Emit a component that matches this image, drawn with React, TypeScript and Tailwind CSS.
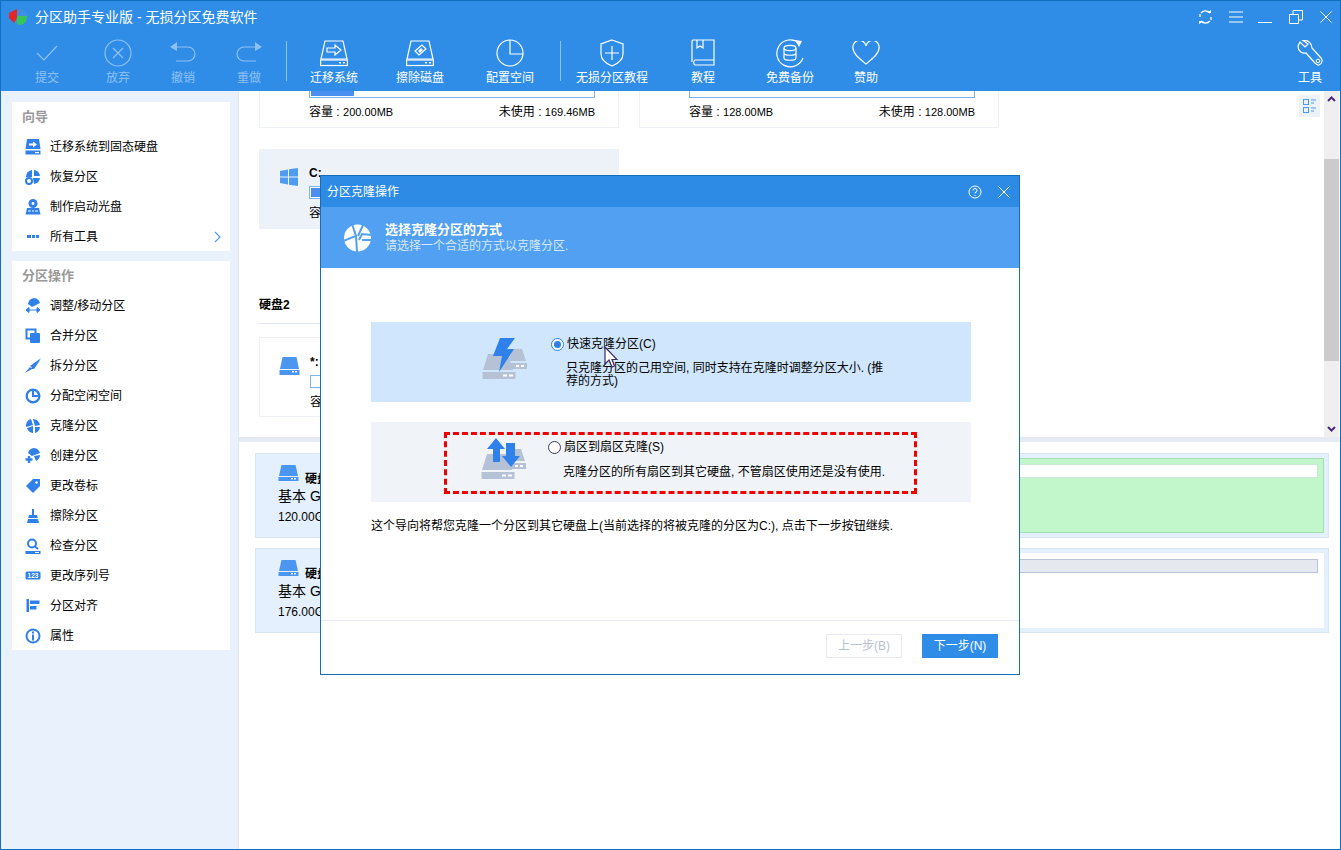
import type { ReactNode } from "react";

const BLUE = "#2f80e8";

function Ic({ w = 16, h = 16, box, children, className = "" }: { w?: number; h?: number; box?: string; children: ReactNode; className?: string }) {
  return (
    <svg width={w} height={h} viewBox={box ?? `0 0 ${w} ${h}`} fill="none" className={`block shrink-0 ${className}`}>
      {children}
    </svg>
  );
}

// hard disk shape used by many icons
function DiskSolid({ color = "#4a96f0", tall }: { color?: string; tall?: boolean }) {
  const top = tall ? 12 : 11;
  return (
    <Ic w={21} h={tall ? 18 : 16}>
      <path d={`M3.5 0H17.5L20 ${top}H1Z`} fill={color} />
      <rect x="0.5" y={top + 1} width="20" height={tall ? 5 : 4} fill={color} />
      <rect x="13" y={top + 2} width="2" height="1.4" fill="#fff" />
      <rect x="16" y={top + 2} width="2" height="1.4" fill="#fff" />
    </Ic>
  );
}

function CloneDisks({ bolt }: { bolt: boolean }) {
  return (
    <Ic w={46} h={44}>
      <path d="M31 11H40L44 23H26Z" fill="#b5c2d6" />
      <rect x="26" y="25" width="19" height="6" fill="#b5c2d6" />
      <path d="M6 16H26L31 32H1Z" fill="#b5c2d6" />
      <rect x="0.5" y="34" width="33" height="7" fill="#b5c2d6" />
      <rect x="21" y="36.5" width="4" height="2" fill="#fff" />
      <rect x="27" y="36.5" width="4" height="2" fill="#fff" />
      <rect x="34" y="27" width="3" height="2" fill="#fff" />
      <rect x="39" y="27" width="3" height="2" fill="#fff" />
      {bolt ? (
        <path d="M18 0H33L25 11H32L17 34L20 18H11Z" fill="#2f80e8" />
      ) : (
        <>
          <path d="M15 0L24 11H19V24H12V11H6Z" fill="#2f80e8" />
          <path d="M25 5H34V18H39L30 29L21 18H25Z" fill="#2f80e8" />
        </>
      )}
    </Ic>
  );
}

const S = { stroke: "#fff", strokeWidth: 1.2 };
const D = { stroke: "#8fc0f3", strokeWidth: 1.2 };

const tools: { label: string; w: number; off?: boolean; icon: ReactNode; sep?: boolean }[] = [
  {
    label: "提交", w: 70, off: true,
    icon: <Ic w={28} h={28}><path d="M4 14L11 21L24 7" {...D} /></Ic>,
  },
  {
    label: "放弃", w: 72, off: true,
    icon: <Ic w={28} h={28}><circle cx="14" cy="14" r="13" {...D} /><path d="M9 9L19 19M19 9L9 19" {...D} /></Ic>,
  },
  {
    label: "撤销", w: 58, off: true,
    icon: <Ic w={28} h={28}><path d="M6 8H19A6.5 6.5 0 0 1 19 22H7" {...D} /><path d="M8 3V12L1 8Z" fill="#8fc0f3" /></Ic>,
  },
  {
    label: "重做", w: 74, off: true, sep: true,
    icon: <Ic w={28} h={28}><path d="M22 8H9A6.5 6.5 0 0 0 9 22H21" {...D} /><path d="M20 3V12L27 8Z" fill="#8fc0f3" /></Ic>,
  },
  {
    label: "迁移系统", w: 92,
    icon: (
      <Ic w={28} h={28}>
        <path d="M5 2H23L27 20H1Z" {...S} />
        <rect x="0.6" y="21" width="26.8" height="5.5" {...S} />
        <rect x="19" y="23" width="2" height="1.4" fill="#fff" />
        <rect x="23" y="23" width="2" height="1.4" fill="#fff" />
        <path d="M7 9H15V6L21 11L15 16V13H7Z" {...S} />
      </Ic>
    ),
  },
  {
    label: "擦除磁盘", w: 80,
    icon: (
      <Ic w={28} h={28}>
        <path d="M5 2H23L27 20H1Z" {...S} />
        <rect x="0.6" y="21" width="26.8" height="5.5" {...S} />
        <rect x="19" y="23" width="2" height="1.4" fill="#fff" />
        <rect x="23" y="23" width="2" height="1.4" fill="#fff" />
        <path d="M9 12L16 6L20 10L13 16Z" {...S} />
        <path d="M12 12L15 9L17 11L14 14Z" fill="#fff" />
      </Ic>
    ),
  },
  {
    label: "配置空间", w: 100, sep: true,
    icon: <Ic w={28} h={28}><circle cx="14" cy="14" r="13" {...S} /><path d="M14 1V15H27" {...S} /></Ic>,
  },
  {
    label: "无损分区教程", w: 100,
    icon: <Ic w={24} h={28}><path d="M12 1L23 5V15C23 21 17 25 12 27C7 25 1 21 1 15V5Z" {...S} /><path d="M12 7V21M5 14H19" {...S} /></Ic>,
  },
  {
    label: "教程", w: 82,
    icon: (
      <Ic w={24} h={28}>
        <path d="M1 23V2A1.5 1.5 0 0 1 2.5 1H23V26H4A3 3 0 0 1 4 21H23" {...S} />
        <path d="M6 1V9L9 7L12 9V1" {...S} />
      </Ic>
    ),
  },
  {
    label: "免费备份", w: 92,
    icon: (
      <Ic w={30} h={30}>
        <path d="M24 5A13.5 13.5 0 1 0 28 20" {...S} />
        <path d="M20 2L27 3L24 9Z" fill="#fff" />
        <ellipse cx="15" cy="10" rx="6" ry="2.6" {...S} />
        <path d="M9 10V20C9 23 21 23 21 20V10M9 15C9 18 21 18 21 15" {...S} />
      </Ic>
    ),
  },
  {
    label: "赞助", w: 60,
    icon: <Ic w={28} h={24}><path d="M14 23C8 18 1 13 1 7A6 6 0 0 1 14 5A6 6 0 0 1 27 7C27 13 20 18 14 23Z" {...S} /></Ic>,
  },
];

function ToolBtn({ t }: { t: (typeof tools)[number] }) {
  return (
    <div className="flex flex-col items-center" style={{ width: t.w }}>
      <div className="h-[30px] flex items-center justify-center">{t.icon}</div>
      <div className={`mt-[2px] text-[12px] leading-[16px] whitespace-nowrap ${t.off ? "text-[#8fc0f3]" : "text-white"}`}>{t.label}</div>
    </div>
  );
}

function Header() {
  return (
    <header className="h-[90px] shrink-0 bg-[#2f8de8] flex flex-col">
      <div className="h-[32px] flex items-center pl-[7px]">
        <Ic w={20} h={18}>
          <circle cx="12" cy="9" r="8" fill="#3d8fe0" />
          <path d="M1 5L9 1V10H1Z" fill="#e4262b" />
          <path d="M9 10L6 15L1 10Z" fill="#e4262b" />
          <path d="M9 8H19C19 13 16 17 11 17L9 15Z" fill="#35c65a" />
        </Ic>
        <div className="ml-[7px] text-[14px] text-white whitespace-nowrap">分区助手专业版 - 无损分区免费软件</div>
        <div className="ml-auto flex items-center">
          <Ic w={14} h={16} className="mr-[17px]">
            <path d="M3 4A6 6 0 0 1 12 4M12 12A6 6 0 0 1 3 12M2 8V5M13 8V11" stroke="#fff" strokeWidth="1.3" />
            <path d="M9 4H13V1Z" fill="#fff" />
            <path d="M6 12H1V15Z" fill="#fff" />
          </Ic>
          <Ic w={14} h={12} className="mr-[15px]"><path d="M0 1H14M0 6H14M0 11H14" stroke="#fff" strokeWidth="1" /></Ic>
          <Ic w={14} h={14} className="mr-[17px]"><path d="M0 12.5H14" stroke="#fff" strokeWidth="1" /></Ic>
          <Ic w={14} h={14} className="mr-[17px]">
            <path d="M0.5 4.5H9.5V13.5H0.5ZM4 4V0.5H13.5V10H10" stroke="#fff" strokeWidth="1" />
          </Ic>
          <Ic w={12} h={12} className="mr-[8px]"><path d="M0.5 0.5L11.5 11.5M11.5 0.5L0.5 11.5" stroke="#fff" strokeWidth="1" /></Ic>
        </div>
      </div>
      <div className="flex-1 flex items-start pl-[11px] pt-[5px]">
        {tools.map((t) => (
          <div key={t.label} className="flex items-start">
            <ToolBtn t={t} />
            {t.sep && <div className="w-px h-[40px] mt-[3px] mr-[1px] bg-[#8fc0f3]" />}
          </div>
        ))}
        <div className="ml-auto flex flex-col items-center w-[60px]">
          <div className="h-[30px] flex items-center">
            <Ic w={26} h={26}>
              <path d="M3 2L8 7L11 4L6 0.5C11 0 15 3 15 8L24 18C26 20 25 24 22 25C20 25.5 19 24 18 23L9 13C5 14 1 11 1 6Z" stroke="#fff" strokeWidth="1.2" />
              <circle cx="21" cy="21" r="1.8" stroke="#fff" />
            </Ic>
          </div>
          <div className="mt-[2px] text-[12px] leading-[16px] text-white">工具</div>
        </div>
      </div>
    </header>
  );
}

const navIcons: Record<string, ReactNode> = {
  migrate: (
    <Ic w={16} h={16}>
      <path d="M2 0H14L15.5 10H.5Z" fill={BLUE} />
      <rect x="0.5" y="11.5" width="15" height="4" fill={BLUE} />
      <path d="M4 4.5H8V2.5L12 5.5L8 8.5V6.5H4Z" fill="#fff" />
      <rect x="10" y="13" width="4" height="1.2" fill="#fff" />
    </Ic>
  ),
  restore: (
    <Ic w={16} h={16}>
      <path d="M7 1V8H1A7 7 0 0 1 7 1Z" fill={BLUE} />
      <path d="M9 1A7 7 0 0 1 15 7H9Z" fill={BLUE} />
      <path d="M8 9H15A7 7 0 0 1 9 15Z" fill={BLUE} />
      <circle cx="4" cy="12" r="3" stroke={BLUE} strokeWidth="2" />
    </Ic>
  ),
  boot: (
    <Ic w={16} h={16}>
      <circle cx="8" cy="4.5" r="4.5" fill={BLUE} />
      <circle cx="8" cy="4.5" r="1.4" fill="#fff" />
      <path d="M2 9H14L15.5 15.5H.5Z" fill={BLUE} />
      <path d="M3 12H6M7 12H9M10 12H13" stroke="#fff" />
    </Ic>
  ),
  dots: <Ic w={16} h={16}><path d="M2 6H6V9H2ZM7 6H10V9H7ZM11 6H14V9H11Z" fill={BLUE} /></Ic>,
  resize: (
    <Ic w={16} h={16}>
      <path d="M9 0A7 7 0 0 1 15 5L7 9L3 6A7 7 0 0 1 9 0Z" fill={BLUE} />
      <path d="M1 12H15M1 12L4 9.5V14.5ZM15 12L12 9.5V14.5Z" fill={BLUE} stroke={BLUE} />
    </Ic>
  ),
  merge: (
    <Ic w={16} h={16}>
      <rect x="1.5" y="1.5" width="9" height="9" stroke={BLUE} strokeWidth="2" />
      <rect x="5" y="5" width="10" height="10" rx="1" fill={BLUE} />
    </Ic>
  ),
  split: (
    <Ic w={16} h={16}>
      <path d="M16 0L8 10L5 8Z" fill={BLUE} />
      <path d="M16 1L9 11H5Z" fill={BLUE} />
      <path d="M0 15L5 9L7 11Z" fill={BLUE} />
    </Ic>
  ),
  alloc: (
    <Ic w={16} h={16}>
      <circle cx="8" cy="8" r="6.3" stroke={BLUE} strokeWidth="2.4" />
      <path d="M8 3V8H13A5 5 0 0 1 8 13A5 5 0 0 1 8 3Z" fill="#fff" />
      <path d="M8 2V8H14" stroke={BLUE} strokeWidth="2" />
    </Ic>
  ),
  clone: (
    <Ic w={16} h={16}>
      <path d="M6 1L8 7L1 9A7 7 0 0 1 6 1Z" fill={BLUE} />
      <path d="M8 1A7 7 0 0 1 15 7L10 8Z" fill={BLUE} />
      <path d="M2 10L8 8L8 15A7 7 0 0 1 2 10Z" fill={BLUE} />
      <path d="M10 9H15A7 7 0 0 1 10 15Z" fill={BLUE} />
    </Ic>
  ),
  create: (
    <Ic w={16} h={16}>
      <path d="M9 0A7 7 0 0 1 15 5L7 8L3 5A7 7 0 0 1 9 0Z" fill={BLUE} />
      <path d="M9 8L15 7A7 7 0 0 1 11 13Z" fill={BLUE} />
      <path d="M4 8V15M0.5 11.5H7.5" stroke={BLUE} strokeWidth="2.4" />
    </Ic>
  ),
  tag: (
    <Ic w={16} h={16}>
      <path d="M8 1H15V8L8 15L1 8Z" fill={BLUE} />
      <circle cx="11.5" cy="4.5" r="1.2" fill="#fff" />
    </Ic>
  ),
  broom: (
    <Ic w={16} h={16}>
      <rect x="7" y="1" width="2" height="6" fill={BLUE} />
      <path d="M4 7H12L14 15H2Z" fill={BLUE} />
      <path d="M3 10.5H13" stroke="#fff" />
    </Ic>
  ),
  check: (
    <Ic w={16} h={16}>
      <circle cx="7" cy="5.5" r="4" stroke={BLUE} strokeWidth="2" />
      <path d="M10 8.5L13 11" stroke={BLUE} strokeWidth="2" />
      <rect x="0.5" y="13" width="15" height="3" fill={BLUE} />
      <rect x="10" y="14" width="4" height="1" fill="#fff" />
    </Ic>
  ),
  serial: (
    <Ic w={16} h={16}>
      <rect x="0.5" y="3.5" width="15" height="8" rx="1.5" fill={BLUE} />
      <text x="8" y="10" fontSize="6.5" fontWeight="700" fill="#fff" textAnchor="middle" fontFamily="Liberation Sans">123</text>
    </Ic>
  ),
  align: (
    <Ic w={16} h={16}>
      <rect x="1.5" y="1" width="2.5" height="13" fill={BLUE} />
      <rect x="5" y="2.5" width="9.5" height="3.5" fill={BLUE} />
      <rect x="5" y="8" width="6.5" height="3.5" fill={BLUE} />
    </Ic>
  ),
  info: (
    <Ic w={16} h={16}>
      <circle cx="8" cy="8" r="6.5" stroke={BLUE} strokeWidth="2" />
      <rect x="7" y="3.5" width="2" height="2" fill={BLUE} />
      <rect x="7" y="6.5" width="2" height="6" fill={BLUE} />
    </Ic>
  ),
};

function NavRow({ icon, label, more }: { icon: string; label: string; more?: boolean }) {
  return (
    <div className="h-[30px] flex items-center pl-[13px]">
      {navIcons[icon]}
      <span className="ml-[9px] text-[12px] text-black whitespace-nowrap">{label}</span>
      {more && (
        <Ic w={7} h={12} className="ml-auto mr-[9px]"><path d="M1 1L6 6L1 11" stroke="#4a9af0" strokeWidth="1.1" /></Ic>
      )}
    </div>
  );
}

function Sidebar() {
  const ops: [string, string][] = [
    ["resize", "调整/移动分区"], ["merge", "合并分区"], ["split", "拆分分区"], ["alloc", "分配空闲空间"],
    ["clone", "克隆分区"], ["create", "创建分区"], ["tag", "更改卷标"], ["broom", "擦除分区"],
    ["check", "检查分区"], ["serial", "更改序列号"], ["align", "分区对齐"], ["info", "属性"],
  ];
  return (
    <aside className="w-[238px] shrink-0 bg-[#e9f1fc] border-r border-[#dfe7f3] pl-[11px] pt-[11px]">
      <div className="w-[218px] h-[149px] bg-white">
        <div className="h-[29px] pl-[10px] pt-[6px] text-[13px] leading-[18px] font-bold text-[#999999]">向导</div>
        <div className="pt-px">
          <NavRow icon="migrate" label="迁移系统到固态硬盘" />
          <NavRow icon="restore" label="恢复分区" />
          <NavRow icon="boot" label="制作启动光盘" />
          <NavRow icon="dots" label="所有工具" more />
        </div>
      </div>
      <div className="w-[218px] h-[389px] mt-[10px] bg-white">
        <div className="h-[29px] pl-[10px] pt-[6px] text-[13px] leading-[18px] font-bold text-[#999999]">分区操作</div>
        <div className="pt-px">
          {ops.map(([i, l]) => <NavRow key={l} icon={i} label={l} />)}
        </div>
      </div>
    </aside>
  );
}

function Size({ a, b }: { a: string; b: string }) {
  return (
    <div className="flex justify-between text-[12px] leading-[14px] text-black whitespace-nowrap">
      <span>容量 : <span className="text-[11px]">{a}</span></span>
      <span>未使用 : <span className="text-[11px]">{b}</span></span>
    </div>
  );
}

function TopCard({ a, b, fill }: { a: string; b: string; fill?: boolean }) {
  return (
    <div className="w-[360px] h-[37px] border-x border-b border-[#eef1f6] pl-[49px] pr-[23px]">
      <div className="h-[7px] border-x border-b border-[#7db4ef] pl-[1px]">
        {fill && <div className="w-[43px] h-[5px] bg-[#4a90ee]" />}
      </div>
      <div className="mt-[7px]"><Size a={a} b={b} /></div>
    </div>
  );
}

function PartCard({ name, icon, fill, selected }: { name: string; icon: ReactNode; fill?: boolean; selected?: boolean }) {
  return (
    <div className={`w-[360px] h-[80px] flex ${selected ? "bg-[#edf2f9]" : "border border-[#eef1f6]"}`}>
      <div className="w-[50px] pl-[19px] pt-[19px]">{icon}</div>
      <div className="w-[286px] pt-[17px]">
        <div className="text-[12px] leading-[14px] font-bold text-black">{name}</div>
        <div className="h-[13px] mt-[6px] border border-[#7db4ef] bg-white p-[1px]">
          {fill && <div className="w-[90px] h-full bg-[#4a90ee]" />}
        </div>
        <div className="mt-[7px]"><Size a="119.80GB" b="86.20GB" /></div>
      </div>
    </div>
  );
}

function Upper() {
  return (
    <div className="h-[346px] shrink-0 flex">
      <div className="relative flex-1 pl-[20px] overflow-hidden">
        <div className="flex gap-[20px]">
          <TopCard a="200.00MB" b="169.46MB" fill />
          <TopCard a="128.00MB" b="128.00MB" />
        </div>
        <div className="mt-[21px]">
          <PartCard
            selected
            fill
            name="C:"
            icon={
              <Ic w={18} h={18} className="ml-[2px]">
                <path d="M0 3L8 1.5V8.5H0ZM9 1.3L18 0V8.5H9ZM0 9.5H8V16.5L0 15ZM9 9.5H18V18L9 16.7Z" fill="#4f9bef" />
              </Ic>
            }
          />
        </div>
        <div className="w-[700px] h-[28px] mt-[67px] border-b border-[#e3e7ef] text-[12px] leading-[18px] font-bold text-black">硬盘2</div>
        <div className="mt-[13px]">
          <PartCard name="*:" icon={<DiskSolid tall />} />
        </div>
        <div className="absolute right-[4px] top-[4px] w-[21px] h-[22px] bg-[#edf2f9] flex items-center justify-center">
          <Ic w={14} h={14}>
            <rect x="0.5" y="0.5" width="5" height="5" stroke="#4a9af0" />
            <rect x="0.5" y="8.5" width="5" height="5" stroke="#4a9af0" />
            <path d="M8 1H13M8 4H11M8 9H13M8 12H11" stroke="#4a9af0" />
          </Ic>
        </div>
      </div>
      <div className="w-[16px] shrink-0 pr-[1px]">
        <div className="h-full bg-[#efefef] flex flex-col items-center">
          <Ic w={9} h={6} className="mt-[5px]"><path d="M1 5L4.5 1.5L8 5" stroke="#4b2a82" strokeWidth="2" /></Ic>
          <div className="w-full h-[202px] mt-[57px] bg-[#cbcbcb]" />
          <Ic w={9} h={6} className="mt-auto mb-[5px]"><path d="M1 1L4.5 4.5L8 1" stroke="#4b2a82" strokeWidth="2" /></Ic>
        </div>
      </div>
    </div>
  );
}

function DiskRow({ title, size, children }: { title: string; size: string; children: ReactNode }) {
  return (
    <div className="w-[1074px] h-[85px] bg-[#e4f0fd] border border-[#d9e5f3] flex p-[4px]">
      <div className="w-[120px] shrink-0 pl-[18px] pt-[7px]">
        <div className="flex items-start h-[16px]">
          <DiskSolid />
          <span className="ml-[6px] mt-[8px] text-[12px] leading-[12px] font-bold text-black">{title}</span>
        </div>
        <div className="mt-[6px] text-[14px] leading-[18px] text-black">基本 GPT</div>
        <div className="mt-[3px] text-[12px] leading-[18px] text-black">{size}</div>
      </div>
      {children}
    </div>
  );
}

function Lower() {
  return (
    <div className="pl-[16px] pt-[11px] flex flex-col gap-[10px]">
      <DiskRow title="硬盘1" size="120.00GB">
        <div className="flex-1 bg-[#c2f6cb] border border-[#a3dfb0] pt-[5px] pr-[5px]">
          <div className="h-[14px] ml-[5px] bg-white border border-[#cfe6d9]" />
        </div>
      </DiskRow>
      <DiskRow title="硬盘2" size="176.00GB">
        <div className="flex-1 bg-white pt-[6px] pr-[6px]">
          <div className="h-[14px] ml-[5px] bg-[#e5e8ef] border border-[#b8c2d8]" />
        </div>
      </DiskRow>
    </div>
  );
}

function Radio({ on }: { on?: boolean }) {
  return (
    <span className={`w-[13px] h-[13px] rounded-full bg-white flex items-center justify-center shrink-0 border ${on ? "border-[#2f80e8]" : "border-[#3b3a66]"}`}>
      {on && <span className="w-[7px] h-[7px] rounded-full bg-[#2f80e8]" />}
    </span>
  );
}

function CloneDialog() {
  return (
    <div className="absolute left-[319px] top-[174px] w-[700px] h-[500px] bg-white border border-[#146fb8] flex flex-col">
      <div className="h-[31px] shrink-0 bg-[#2d8be6] flex items-center pl-[6px] text-[12px] text-white">
        <span>分区克隆操作</span>
        <Ic w={14} h={14} className="ml-auto mr-[16px]">
          <circle cx="7" cy="7" r="6" stroke="#fff" />
          <path d="M5 5.5A2 2 0 1 1 7 7.5V8.5" stroke="#fff" />
          <rect x="6.5" y="10" width="1" height="1" fill="#fff" />
        </Ic>
        <Ic w={12} h={12} className="mr-[9px]"><path d="M0.5 0.5L11.5 11.5M11.5 0.5L0.5 11.5" stroke="#fff" /></Ic>
      </div>
      <div className="h-[61px] shrink-0 bg-[#52a0f2] flex items-center pl-[22px]">
        <Ic w={29} h={29}>
          <circle cx="14.5" cy="15" r="13.5" fill="#fff" />
          <path d="M9 1L13 13L0 18M13 13L14 29M20 2L15 13M16 17L19 11L29 12M19 17H29" stroke="#52a0f2" strokeWidth="2" />
        </Ic>
        <div className="ml-[13px]">
          <div className="text-[13px] leading-[17px] font-bold text-white">选择克隆分区的方式</div>
          <div className="text-[12px] leading-[17px] text-[#d6e8fb]">请选择一个合适的方式以克隆分区.</div>
        </div>
      </div>

      <div className="flex-1 pl-[50px] pr-[48px] pt-[54px]">
        <div className="h-[80px] bg-[#cfe6fd] flex pl-[111px] pt-[16px]">
          <CloneDisks bolt />
          <div className="ml-[23px] text-[12px] text-black">
            <div className="flex items-center h-[12px]">
              <Radio on />
              <span className="ml-[3px]">快速克隆分区(C)</span>
            </div>
            <div className="mt-[12px] ml-[15px] leading-[13px] w-[330px]">
              只克隆分区的己用空间, 同时支持在克隆时调整分区大小. (推<br />荐的方式)
            </div>
          </div>
        </div>
        <div className="h-[80px] mt-[20px] bg-[#f0f4f8] pt-[10px] pl-[73px]">
          <div className="w-[473px] h-[62px] border-[3px] border-dashed border-[#f00000] flex pl-[34px] pt-[3px]">
            <CloneDisks bolt={false} />
            <div className="ml-[21px] text-[12px] text-black">
              <div className="flex items-center h-[14px] mt-[2px]">
                <Radio />
                <span className="ml-[3px]">扇区到扇区克隆(S)</span>
              </div>
              <div className="mt-[11px] ml-[15px] leading-[14px] whitespace-nowrap">
                克隆分区的所有扇区到其它硬盘, 不管扇区使用还是没有使用.
              </div>
            </div>
          </div>
        </div>
        <div className="mt-[17px] text-[12px] leading-[14px] text-black whitespace-nowrap">
          这个导向将帮您克隆一个分区到其它硬盘上(当前选择的将被克隆的分区为C:), 点击下一步按钮继续.
        </div>
      </div>

      <div className="h-[54px] shrink-0 border-t border-[#e6e9f1] flex justify-end items-start pt-[13px] pr-[21px] gap-[20px]">
        <div className="w-[76px] h-[24px] border border-[#e6e9f1] flex items-center justify-center text-[12px] text-[#b8c0d0]">上一步(B)</div>
        <div className="w-[76px] h-[24px] bg-[#2f8de8] flex items-center justify-center text-[12px] text-white">下一步(N)</div>
      </div>
    </div>
  );
}

export default function App() {
  return (
    <div className="relative w-[1341px] h-[850px] overflow-hidden bg-white border border-[#0f6fc0] flex flex-col font-['Liberation_Sans','Noto_Sans_CJK_SC',sans-serif]">
      <Header />
      <div className="flex-1 flex min-h-0">
        <Sidebar />
        <main className="flex-1 flex flex-col min-w-0">
          <Upper />
          <div className="h-[5px] shrink-0 bg-[#e6ebf3]" />
          <Lower />
        </main>
      </div>
      <CloneDialog />
      <svg width="14" height="22" viewBox="0 0 14 22" className="absolute left-[603px] top-[345px]">
        <path d="M1 1V18L5 14L8 21L10.5 20L8 13.5H13Z" fill="#fff" stroke="#3b2a66" strokeWidth="1.2" />
      </svg>
    </div>
  );
}
